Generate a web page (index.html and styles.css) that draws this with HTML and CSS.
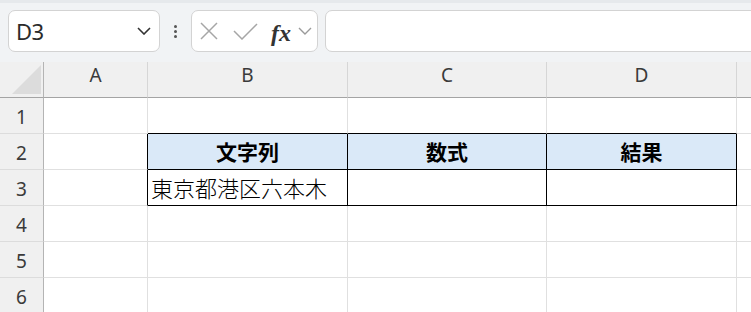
FILE: index.html
```html
<!DOCTYPE html>
<html lang="ja">
<head>
    <meta charset="UTF-8">
    <meta name="viewport" content="width=device-width, initial-scale=1.0">
    <title>Sheet</title>
    <link rel="stylesheet" href="styles.css">
</head>
<body>
    <div class="toolbar">
        <div class="namebox">
            <span class="cell-ref">D3</span>
            <svg class="chev" width="14" height="8" viewBox="0 0 14 8"><path d="M1 1 L7 7 L13 1" fill="none" stroke="#333" stroke-width="1.6"/></svg>
        </div>
        <div class="dots">
            <span></span><span></span><span></span>
        </div>
        <div class="fxbox">
            <svg class="ico-x" width="18" height="18" viewBox="0 0 18 18"><path d="M1 1 L17 17 M17 1 L1 17" stroke="#a6a6a6" stroke-width="1.5" fill="none"/></svg>
            <svg class="ico-check" width="25" height="17" viewBox="0 0 25 17"><path d="M1 8 L9 16 L24 1" stroke="#a6a6a6" stroke-width="1.5" fill="none"/></svg>
            <span class="fx">fx</span>
            <svg class="chev-small" width="14" height="8" viewBox="0 0 14 8"><path d="M1 1 L7 7 L13 1" fill="none" stroke="#9a9a9a" stroke-width="1.4"/></svg>
        </div>
        <div class="formula"></div>
    </div>

    <div class="sheet">
        <div class="corner">
            <svg width="29" height="29" viewBox="0 0 29 29"><path d="M29 0 L29 29 L0 29 Z" fill="#dcdcdc"/></svg>
        </div>
        <div class="colhead">A</div>
        <div class="colhead">B</div>
        <div class="colhead">C</div>
        <div class="colhead">D</div>
        <div class="colhead last"></div>

        <div class="rowhead">1</div>
        <div class="cell"></div>
        <div class="cell bb"></div>
        <div class="cell bb"></div>
        <div class="cell bb"></div>
        <div class="cell last"></div>

        <div class="rowhead">2</div>
        <div class="cell br"></div>
        <div class="cell tb th">文字列</div>
        <div class="cell tb th">数式</div>
        <div class="cell tb th">結果</div>
        <div class="cell last"></div>

        <div class="rowhead">3</div>
        <div class="cell br"></div>
        <div class="cell tb td">東京都港区六本木</div>
        <div class="cell tb"></div>
        <div class="cell tb"></div>
        <div class="cell last"></div>

        <div class="rowhead">4</div>
        <div class="cell"></div>
        <div class="cell"></div>
        <div class="cell"></div>
        <div class="cell"></div>
        <div class="cell last"></div>

        <div class="rowhead">5</div>
        <div class="cell"></div>
        <div class="cell"></div>
        <div class="cell"></div>
        <div class="cell"></div>
        <div class="cell last"></div>

        <div class="rowhead">6</div>
        <div class="cell"></div>
        <div class="cell"></div>
        <div class="cell"></div>
        <div class="cell"></div>
        <div class="cell last"></div>
    </div>
</body>
</html>
```

FILE: styles.css
```css
* {
    margin: 0;
    padding: 0;
    box-sizing: border-box;
}

body {
    width: 751px;
    height: 312px;
    overflow: hidden;
    background: #ffffff;
    font-family: 'Noto Sans', 'Noto Sans CJK JP', sans-serif;
    color: #333;
}

.toolbar {
    height: 62px;
    display: flex;
    align-items: flex-start;
    padding: 7px 0 0 8px;
    background: #f1f3f5;
    border-top: 3px solid #e6e9ec;
}

.namebox {
    width: 152px;
    height: 42px;
    display: flex;
    align-items: center;
    justify-content: space-between;
    padding: 0 8px 0 7px;
    background: #fff;
    border: 1px solid #d3d3d3;
    border-radius: 7px;
}

.cell-ref {
    font-size: 22px;
    color: #2b2b2b;
    letter-spacing: -0.5px;
}

.dots {
    width: 31px;
    height: 42px;
    display: flex;
    flex-direction: column;
    align-items: center;
    justify-content: center;
    gap: 2px;
}

.dots span {
    width: 3px;
    height: 3px;
    border-radius: 50%;
    background: #555;
}

.fxbox {
    width: 127px;
    height: 42px;
    display: flex;
    align-items: center;
    padding-left: 8px;
    background: #fff;
    border: 1px solid #d3d3d3;
    border-radius: 7px;
}

.ico-check {
    margin-left: 15px;
}

.fx {
    margin-left: 13px;
    margin-top: 3px;
    font-family: 'Liberation Serif', serif;
    font-style: italic;
    font-weight: bold;
    font-size: 24px;
    line-height: 1;
    color: #333;
}

.chev-small {
    margin-left: 7px;
}

.formula {
    flex: 1;
    height: 42px;
    margin-left: 7px;
    margin-right: -10px;
    background: #fff;
    border: 1px solid #d3d3d3;
    border-radius: 7px;
}

.sheet {
    display: grid;
    grid-template-columns: 44px 104px 200px 199px 190px 1fr;
    grid-template-rows: 36px repeat(6, 36px);
}

.corner {
    background: #f0f0f0;
    border-right: 1px solid #b4b4b4;
    border-bottom: 1px solid #a4a4a4;
    display: flex;
    align-items: flex-end;
    padding: 0 0 3px 12px;
}

.colhead {
    background: #f0f0f0;
    border-right: 1px solid #d6d6d6;
    border-bottom: 1px solid #a4a4a4;
    text-align: center;
    font-size: 19px;
    line-height: 24px;
    padding-top: 1px;
    color: #3a3a3a;
}

.colhead.last,
.cell.last {
    border-right: none;
}

.rowhead {
    background: #f0f0f0;
    border-right: 1px solid #b4b4b4;
    border-bottom: 1px solid #dcdcdc;
    text-align: center;
    font-size: 19px;
    line-height: 36px;
    padding-top: 1px;
    color: #3a3a3a;
}

.cell {
    border-right: 1px solid #e0e0e0;
    border-bottom: 1px solid #e0e0e0;
}

.cell.bb {
    border-bottom-color: #000;
}

.cell.br {
    border-right-color: #000;
}

.cell.tb {
    border-right-color: #000;
    border-bottom-color: #000;
}

.th {
    background: #dae9f8;
    font-family: 'Noto Sans CJK JP', sans-serif;
    font-weight: bold;
    font-size: 21px;
    line-height: 35px;
    text-align: center;
    color: #000;
}

.td {
    font-family: 'Noto Sans CJK JP', sans-serif;
    font-weight: 300;
    font-size: 22px;
    line-height: 35px;
    padding-left: 3px;
    color: #000;
}
```
